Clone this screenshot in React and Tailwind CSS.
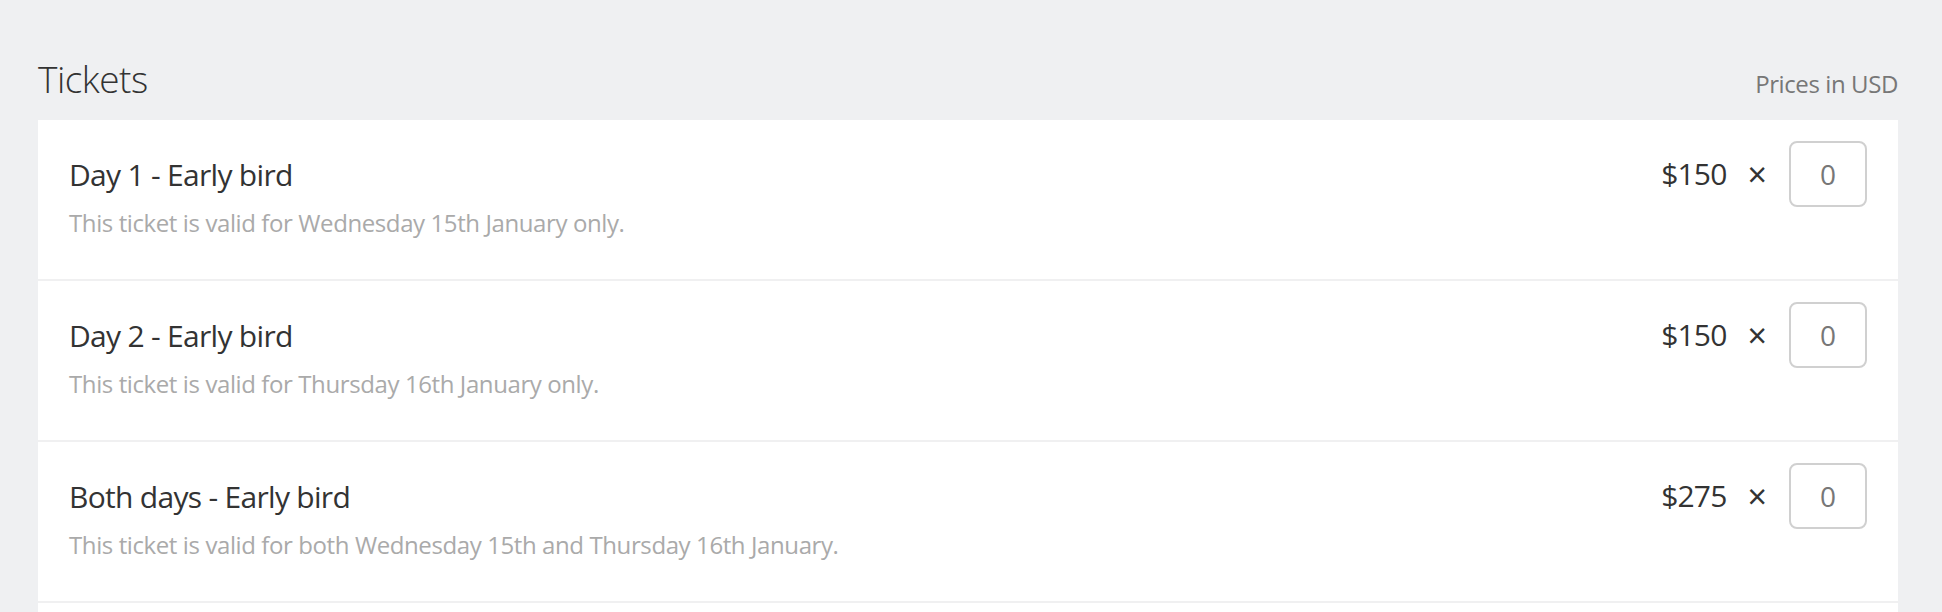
import { useState } from 'react'

const tickets = [
  { id: 'day1', name: 'Day 1 - Early bird', description: 'This ticket is valid for Wednesday 15th January only.', price: '$150' },
  { id: 'day2', name: 'Day 2 - Early bird', description: 'This ticket is valid for Thursday 16th January only.', price: '$150' },
  { id: 'both', name: 'Both days - Early bird', description: 'This ticket is valid for both Wednesday 15th and Thursday 16th January.', price: '$275' }
]

const TicketRow = ({ ticket, quantity, onChange }) => (
  <div className="flex items-start justify-between border-b-2 border-[#f0f0f1] pl-[31px] pr-[31px] pt-[39px] pb-[43px]">
    <div>
      <div className="text-[30px] leading-[32px] tracking-[-0.7px] text-[#333]">{ticket.name}</div>
      <div className="mt-[19px] text-[24px] leading-[26px] tracking-[-0.4px] text-[#aaa]">{ticket.description}</div>
    </div>
    <div className="-mt-[18px] flex items-center">
      <span className="text-[30px] leading-[32px] tracking-[-0.8px] text-[#333]">{ticket.price}</span>
      <span className="ml-[21px] text-[34px] leading-[30px] text-[#333]">×</span>
      <input
        type="text"
        value={quantity}
        onChange={(event) => onChange(ticket.id, event.target.value)}
        className="ml-[22px] h-[66px] w-[78px] rounded-[8px] border-2 border-[#d0d0d0] bg-white text-center text-[28px] text-[#777] outline-none"
      />
    </div>
  </div>
)

const App = () => {
  const [quantities, setQuantities] = useState({ day1: '0', day2: '0', both: '0' })

  const handleChange = (id, value) => {
    setQuantities({ ...quantities, [id]: value })
  }

  return (
    <div className="min-h-screen bg-[#eff0f2] pl-[38px] pr-[44px] pt-[59px] font-['Open_Sans','Noto_Sans',sans-serif]">
      <div className="mb-[22px] flex items-baseline justify-between">
        <h2 className="text-[37px] font-light leading-[39px] tracking-[-0.5px] text-[#333]">Tickets</h2>
        <span className="text-[24px] leading-[26px] tracking-[-0.4px] text-[#777]">Prices in USD</span>
      </div>
      <div className="bg-white">
        {tickets.map((ticket) => (
          <TicketRow key={ticket.id} ticket={ticket} quantity={quantities[ticket.id]} onChange={handleChange} />
        ))}
        <div className="h-[60px]" />
      </div>
    </div>
  )
}

export default App
